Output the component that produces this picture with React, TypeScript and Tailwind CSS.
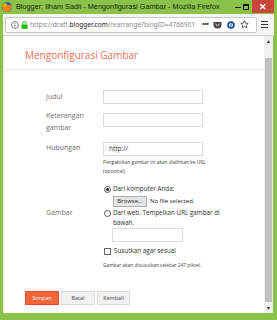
import React from "react";

const F = { fontFamily: '"Open Sans", "Noto Sans", sans-serif' };

export default function App() {
  return (
    <div className="w-[277px] h-[320px] bg-[#8bc34a] flex flex-col overflow-hidden" style={{ fontFamily: '"Noto Sans", sans-serif' }}>
      {/* Title bar */}
      <div className="h-[14px] flex items-center relative shrink-0">
        <div className="ml-[2px] w-[10px] h-[10px] shrink-0 rounded-full bg-[#2b5ea8] relative overflow-hidden">
          <div className="absolute left-0 top-[3px] w-[10px] h-[7px] rounded-b-full bg-[#f0801f]" />
          <div className="absolute left-[1px] top-[1px] w-[4px] h-[4px] rounded-full bg-[#f4b400]" />
        </div>
        <span className="ml-[4px] flex-1 min-w-0 overflow-hidden text-[7.3px] leading-[12px] text-[#1a1a1a] whitespace-nowrap" style={{ fontFamily: '"Liberation Sans", Arial, sans-serif' }}>
          Blogger: Ilham Sadli - Mengonfigurasi Gambar - Mozilla Firefox
        </span>
        <div className="ml-[2px] flex items-start h-[14px] shrink-0">
          <div className="w-[7px] h-[14px] flex items-center"><div className="w-[6px] h-[1px] bg-[#1a1a1a]" /></div>
          <div className="ml-[1px] w-[7px] h-[14px] flex items-center"><div className="w-[6px] h-[6px] border border-[#1a1a1a] border-t-[2px]" /></div>
          <div className="ml-[2px] mr-[3px] w-[22px] h-[13px] bg-[#c9463d] flex items-center justify-center text-white text-[9px] font-bold leading-none">✕</div>
        </div>
      </div>
      {/* Toolbar */}
      <div className="mx-[3px] h-[22px] bg-[#f5f5f5] border-b border-[#cfcfcf] flex items-center shrink-0 relative">
        <div className="ml-[2px] w-[252px] h-[16px] bg-white border border-[#c9c9c9] rounded-[2px] flex items-center">
          <svg width="8" height="8" viewBox="0 0 8 8" className="ml-[5px] shrink-0">
            <circle cx="4" cy="4" r="3.4" fill="none" stroke="#555" strokeWidth="0.8" />
            <rect x="3.6" y="3.4" width="0.8" height="2.4" fill="#555" />
            <rect x="3.6" y="2" width="0.8" height="0.8" fill="#555" />
          </svg>
          <svg width="7" height="8" viewBox="0 0 7 8" className="ml-[2px] shrink-0">
            <path d="M1.8 3.5V2.3a1.7 1.7 0 0 1 3.4 0v1.2" fill="none" stroke="#12bc00" strokeWidth="1" />
            <rect x="0.5" y="3.5" width="6" height="4.3" fill="#12bc00" />
          </svg>
          <span className="ml-[2px] text-[6.6px] text-[#8a8a8a] whitespace-nowrap overflow-hidden w-[166px] shrink-0">
            https://draft.<span className="text-[#222]">blogger.com</span>/rearrange?blogID=4766901721
          </span>
          <span className="ml-[6px] text-[7px] text-[#444] leading-none tracking-[-0.5px] font-bold shrink-0">•••</span>
          <svg width="9" height="8" viewBox="0 0 9 8" className="ml-[5px] shrink-0">
            <path d="M0.5 1h8v2.5a4 4 0 0 1-8 0z" fill="#444" />
            <path d="M2.5 3l2 1.8 2-1.8" fill="none" stroke="#fff" strokeWidth="1" />
          </svg>
          <svg width="8" height="8" viewBox="0 0 8 8" className="ml-[5px] shrink-0">
            <circle cx="4" cy="4" r="3.8" fill="#1a4ea0" />
            <circle cx="4" cy="4" r="2" fill="#fff" />
            <rect x="3.5" y="2.4" width="1" height="3.2" fill="#1a4ea0" />
          </svg>
          <svg width="9" height="9" viewBox="0 0 9 9" className="ml-[5px] shrink-0">
            <path d="M4.5 0.7l1.1 2.4 2.6.3-1.9 1.8.5 2.6-2.3-1.3-2.3 1.3.5-2.6L0.8 3.4l2.6-.3z" fill="none" stroke="#333" strokeWidth="0.8" strokeLinejoin="round" />
          </svg>
        </div>
        <div className="ml-[4px] flex flex-col gap-[2px]">
          <div className="w-[7px] h-[1px] bg-[#333]" />
          <div className="w-[7px] h-[1px] bg-[#333]" />
          <div className="w-[7px] h-[1px] bg-[#333]" />
        </div>
      </div>
      {/* Content + scrollbar */}
      <div className="ml-[3px] mr-[4px] h-[277px] flex shrink-0">
        <div className="flex-1 bg-white border-l border-[#e8e8e8] flex flex-col" style={F}>
          <div className="h-[34px] border-b border-[#ececec] flex items-end pl-[21px] pb-[8px]">
            <span className="text-[10px] leading-[12px] text-[#f36d55]">Mengonfigurasi Gambar</span>
          </div>
          <div className="pl-[42px] flex flex-col text-[#707070]">
            {/* Judul */}
            <div className="mt-[20px] h-[14px] flex">
              <div className="w-[57px] text-[7px] leading-[14px]">Judul</div>
              <div className="w-[100px] h-[14px] border border-[#dcdcdc] bg-white" />
            </div>
            {/* Keterangan */}
            <div className="mt-[9px] h-[29px] flex">
              <div className="w-[57px] text-[7px] leading-[12px] -mt-[3px]">Keterangan<br />gambar</div>
              <div className="w-[100px] h-[14px] border border-[#dcdcdc] bg-white" />
            </div>
            {/* Hubungan */}
            <div className="flex">
              <div className="w-[57px] text-[7px] leading-[12px] mt-[0px]">Hubungan</div>
              <div className="flex flex-col">
                <div className="w-[100px] h-[14px] border border-[#dcdcdc] bg-white flex items-center pl-[5px] text-[6.5px] text-[#333]">http://</div>
                <div className="mt-[2px] text-[4.8px] leading-[9px] text-[#444] whitespace-nowrap">
                  Pengaktikan gambar ini akan dialihkan ke URL<br />(opsional)
                </div>
              </div>
            </div>
            {/* Gambar */}
            <div className="mt-[7px] flex">
              <div className="w-[57px] text-[7px] leading-[12px] mt-[24px]">Gambar</div>
              <div className="flex flex-col text-[#333]">
                <div className="h-[12px] flex items-center">
                  <div className="ml-[1px] w-[7px] h-[7px] rounded-full border border-[#555] bg-white flex items-center justify-center">
                    <div className="w-[3px] h-[3px] rounded-full bg-[#222]" />
                  </div>
                  <span className="ml-[2px] text-[6.3px] whitespace-nowrap">Dari komputer Anda:</span>
                </div>
                <div className="ml-[10px] mt-[1px] flex items-center">
                  <div className="w-[34px] h-[11px] bg-[#e5e5e5] border border-[#adadad] flex items-center justify-center text-[6px] text-[#222]">Browse...</div>
                  <span className="ml-[3px] text-[6px] text-[#222] whitespace-nowrap">No file selected.</span>
                </div>
                <div className="mt-[1px] flex items-start">
                  <div className="ml-[1px] mt-[1.5px] w-[7px] h-[7px] rounded-full border border-[#555] bg-white shrink-0" />
                  <span className="ml-[2px] text-[6.3px] leading-[10px] whitespace-nowrap">Dari web. Tempelkan URL gambar di<br />bawah.</span>
                </div>
                <div className="ml-[9px] w-[71px] h-[14px] border border-[#dcdcdc] bg-white" />
                <div className="mt-[3px] h-[12px] flex items-center">
                  <div className="ml-[1px] w-[7px] h-[7px] border border-[#666] bg-white" />
                  <span className="ml-[3px] text-[6.3px] whitespace-nowrap">Susutkan agar sesuai</span>
                </div>
                <div className="mt-[4px] text-[4.8px] leading-[9px] text-[#444] whitespace-nowrap">
                  Gambar akan disusutkan selebar 247 piksel.
                </div>
              </div>
            </div>
          </div>
          {/* Buttons */}
          <div className="mt-[21px] pl-[21px] flex gap-[2px]">
            <div className="w-[34px] h-[14px] bg-[#f2643a] border border-[#e25127] flex items-center justify-center text-[5.5px] text-white">Simpan</div>
            <div className="w-[34px] h-[14px] bg-[#f1f1f1] border border-[#dcdcdc] flex items-center justify-center text-[5.5px] text-[#444]">Batal</div>
            <div className="w-[33px] h-[14px] bg-[#f1f1f1] border border-[#dcdcdc] flex items-center justify-center text-[5.5px] text-[#444]">Kembali</div>
          </div>
        </div>
        {/* Scrollbar */}
        <div className="w-[9px] bg-[#f0f0f0] flex flex-col items-center">
          <div className="h-[10px] flex items-center justify-center text-[6px] text-[#333] leading-none">▴</div>
          <div className="mt-[12px] w-[7px] h-[244px] bg-[#c1c1c1]" />
          <div className="mt-auto h-[10px] flex items-center justify-center text-[6px] text-[#333] leading-none">▾</div>
        </div>
      </div>
    </div>
  );
}
